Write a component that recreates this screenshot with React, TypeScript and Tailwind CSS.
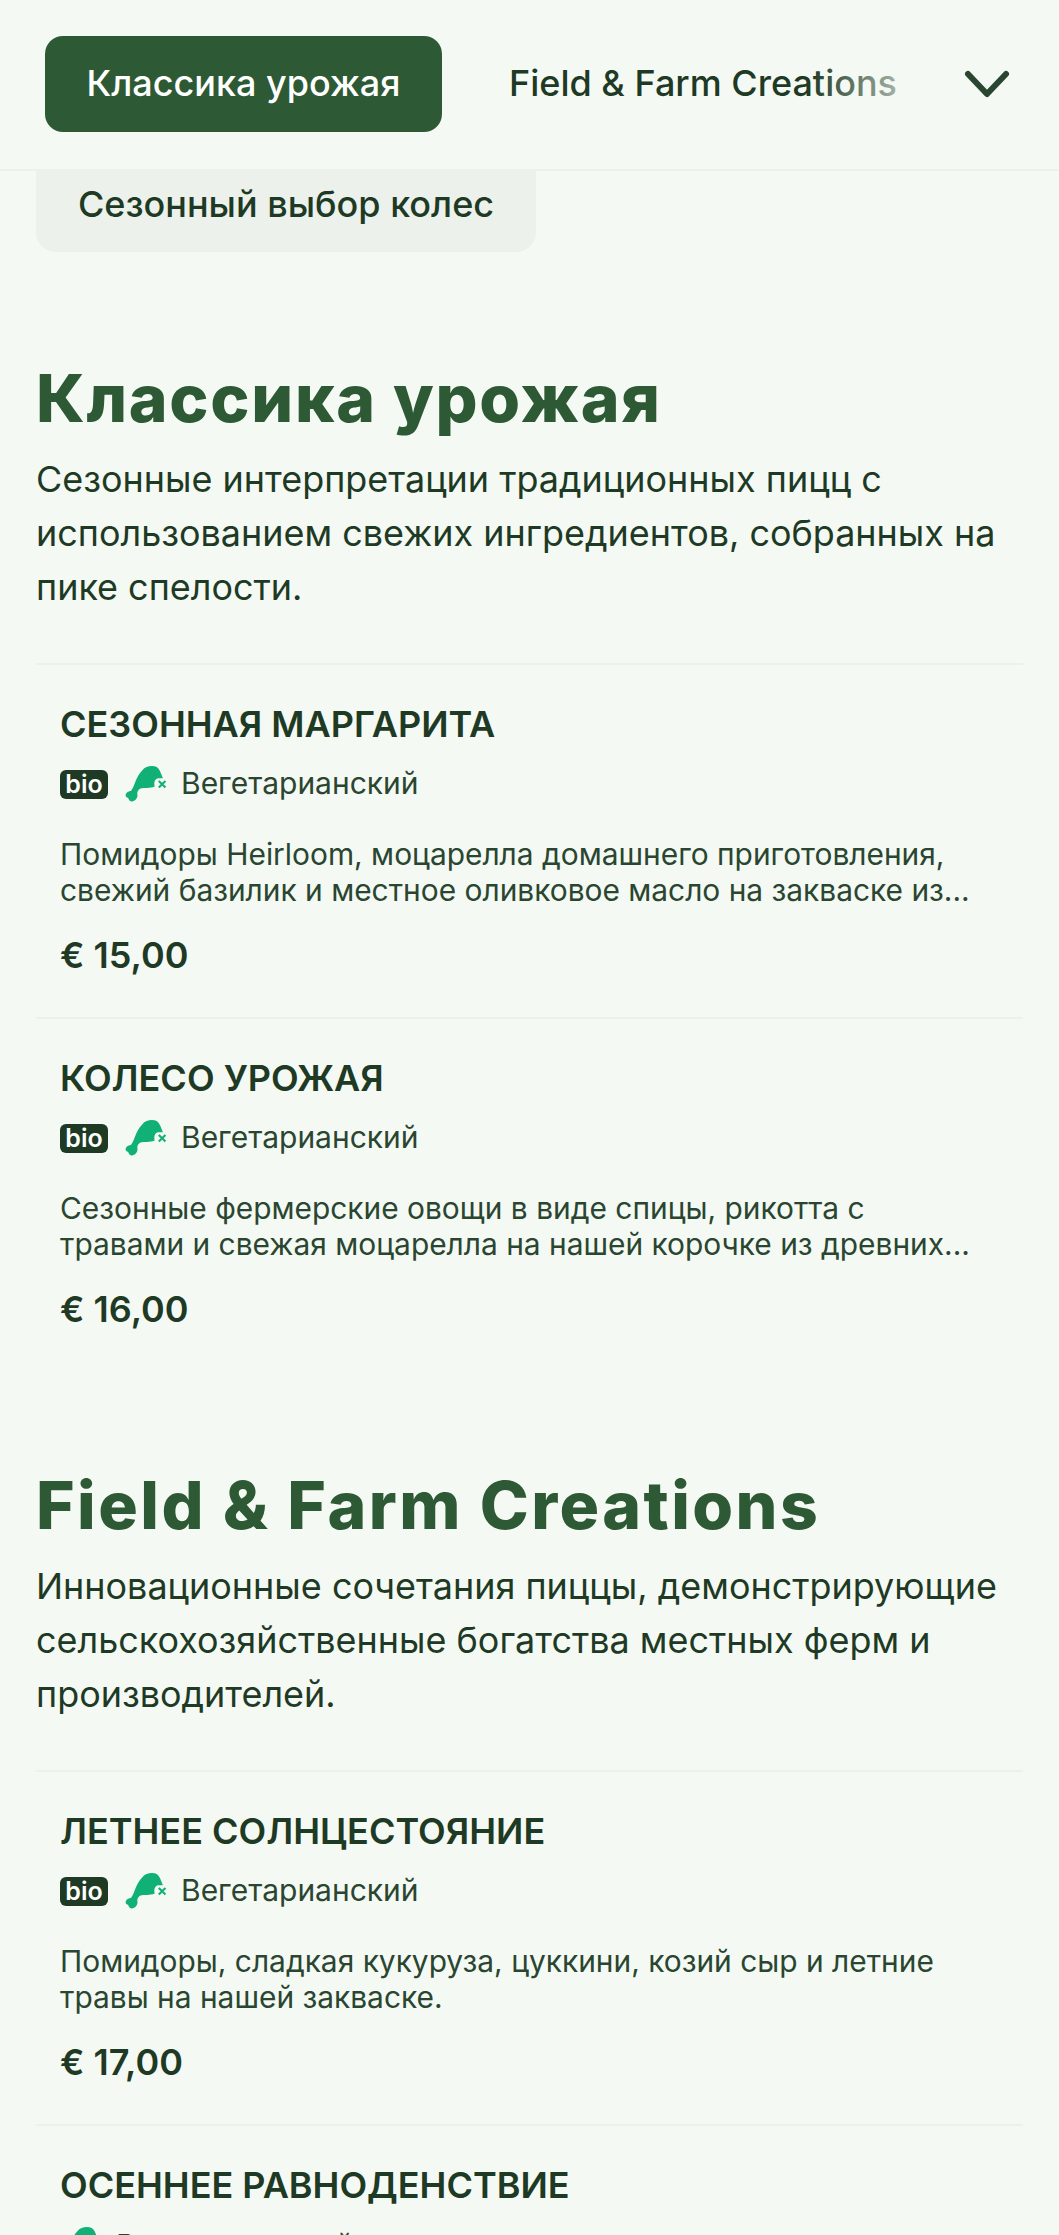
const items1 = [
  {
    title: 'Сезонная Маргарита',
    lines: ['Помидоры Heirloom, моцарелла домашнего приготовления,', 'свежий базилик и местное оливковое масло на закваске из...'],
    price: '€ 15,00',
  },
  {
    title: 'Колесо урожая',
    lines: ['Сезонные фермерские овощи в виде спицы, рикотта с', 'травами и свежая моцарелла на нашей корочке из древних...'],
    price: '€ 16,00',
  },
]

const items2 = [
  {
    title: 'Летнее солнцестояние',
    lines: ['Помидоры, сладкая кукуруза, цуккини, козий сыр и летние', 'травы на нашей закваске.'],
    price: '€ 17,00',
  },
]

function VegIcon() {
  return (
    <svg width="43" height="37" viewBox="0 0 42 36" className="shrink-0">
      <path
        fill="#10b077"
        d="M17 4C20 0 27-1 31 1c3 2 4 6 6 11h-5c-3 1-4 4-3 8-5 2-10 1-14 2-2 1-3 3-3 5 1 4-2 8-6 7.500-2-.5-2.500-2.500-3-3.500-2 0-3-2-2-4 1-2 3-2.500 5-3 2-3 3-6 5-11 2-4 4-7 6-9Z"
      />
      <path d="M33 14.500l6.500 6.500M39.500 14.500L33 21" stroke="#10b077" strokeWidth="2" fill="none" />
    </svg>
  )
}

function MenuItem({ title, lines, price }: { title: string; lines: string[]; price: string }) {
  return (
    <div className="border-t-2 border-[#ecf1ec] px-6 pt-[35px] h-[354px]">
      <h3 className="text-[36px] leading-[48px] font-semibold uppercase text-[#1e3a24]">{title}</h3>
      <div className="mt-[18px] flex items-center h-[36px]">
        <span className="w-[48px] h-[29px] rounded-[6px] bg-[#1e3a24] text-white text-[25px] font-semibold leading-[28px] text-center">bio</span>
        <span className="ml-[17px]"><VegIcon /></span>
        <span className="ml-[13px] text-[30px] text-[#2a4630] pb-[2px]">Вегетарианский</span>
      </div>
      <p className="mt-[34px] text-[29.9px] leading-[36px] text-[#2a4630] whitespace-nowrap">
        {lines.map((l) => (
          <span key={l} className="block">{l}</span>
        ))}
      </p>
      <div className="mt-[23px] text-[36px] leading-[48px] font-semibold text-[#1e3a24]">{price}</div>
    </div>
  )
}

function Section({ title, tracking, desc, children }: { title: string; tracking: string; desc: string[]; children: React.ReactNode }) {
  return (
    <section className="mx-[36px]">
      <h2 className={`text-[66px] leading-[78px] font-extrabold text-[#2d5a34] ${tracking}`}>{title}</h2>
      <p className="mt-[15px] text-[35.95px] leading-[54px] text-[#1e3a24] whitespace-nowrap">
        {desc.map((d) => (
          <span key={d} className="block">{d}</span>
        ))}
      </p>
      <div className="mt-[49px]">{children}</div>
    </section>
  )
}

export default function App() {
  return (
    <div className="h-[2235px] w-[1059px] overflow-hidden bg-[#f4f9f4] font-['Inter',sans-serif]">
      <header className="h-[171px] border-b-2 border-[#ecf1ec] flex items-start pt-[36px] pl-[45px] relative">
        <div className="w-[397px] h-[96px] rounded-[18px] bg-[#2d5a34] text-white text-[36px] font-medium flex items-center justify-center pb-[2px]">
          Классика урожая
        </div>
        <div className="ml-[67px] w-[388px] h-[96px] flex items-center text-[36px] font-medium text-[#1e3a24] whitespace-nowrap pb-[2px]">
          Field &amp; Farm Creations
        </div>
        <div className="absolute left-[810px] top-[60px] w-[140px] h-[48px] bg-gradient-to-r from-transparent to-[#f4f9f4]" />
        <svg width="46" height="28" viewBox="0 0 46 28" className="absolute left-[964px] top-[70px]">
          <path d="M4 4l19 20L42 4" stroke="#2a4630" strokeWidth="6" strokeLinecap="round" strokeLinejoin="round" fill="none" />
        </svg>
      </header>

      <div className="ml-[36px] w-[500px] h-[81px] rounded-b-[20px] bg-[#ecf1ec] flex items-center justify-center text-[36px] font-medium text-[#1e3a24] pb-[16px]">
        Сезонный выбор колес
      </div>

      <div className="mt-[107px]">
        <Section
          title="Классика урожая"
          tracking="tracking-[0.026em]"
          desc={['Сезонные интерпретации традиционных пицц с', 'использованием свежих ингредиентов, собранных на', 'пике спелости.']}
        >
          {items1.map((it) => (
            <MenuItem key={it.title} {...it} />
          ))}
        </Section>
      </div>

      <div className="mt-[95px]">
        <Section
          title="Field & Farm Creations"
          tracking="tracking-[0.037em]"
          desc={['Инновационные сочетания пиццы, демонстрирующие', 'сельскохозяйственные богатства местных ферм и', 'производителей.']}
        >
          {items2.map((it) => (
            <MenuItem key={it.title} {...it} />
          ))}
          <div className="border-t-2 border-[#ecf1ec] px-6 pt-[35px]">
            <h3 className="text-[36px] leading-[48px] font-semibold uppercase text-[#1e3a24]">Осеннее равноденствие</h3>
            <div className="mt-[18px] flex items-center h-[36px]">
              <VegIcon />
              <span className="ml-[13px] text-[30px] text-[#2a4630]">Вегетарианский</span>
            </div>
          </div>
        </Section>
      </div>
    </div>
  )
}
